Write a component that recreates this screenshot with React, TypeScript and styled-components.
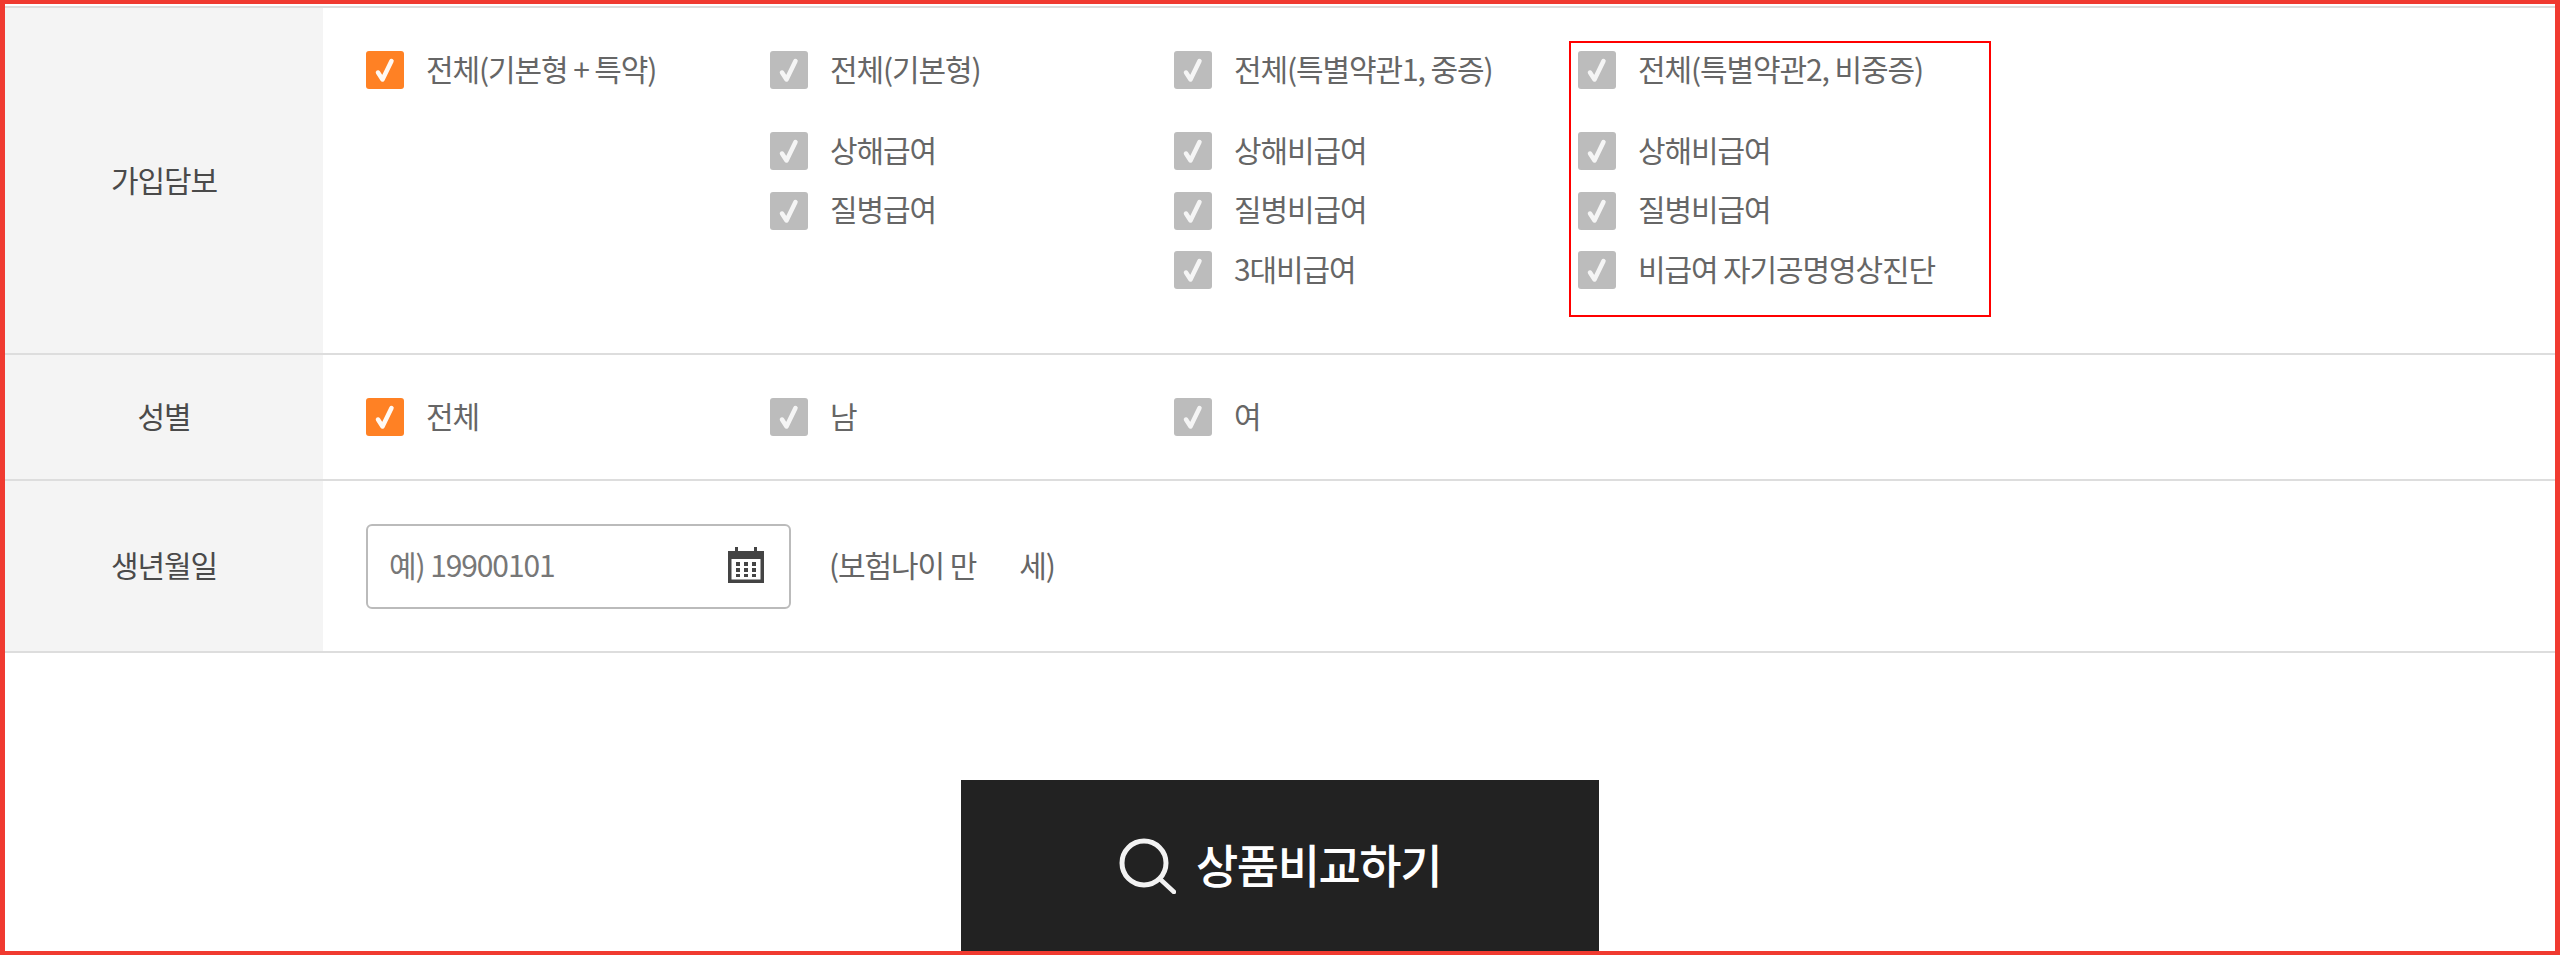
import React from 'react';
import styled, { createGlobalStyle } from 'styled-components';

const columns = [
  {
    lead: { label: '전체(기본형 + 특약)', active: true },
    items: [],
  },
  {
    lead: { label: '전체(기본형)', active: false },
    items: ['상해급여', '질병급여'],
  },
  {
    lead: { label: '전체(특별약관1, 중증)', active: false },
    items: ['상해비급여', '질병비급여', '3대비급여'],
  },
  {
    lead: { label: '전체(특별약관2, 비중증)', active: false },
    items: ['상해비급여', '질병비급여', '비급여 자기공명영상진단'],
    marked: true,
  },
];

const genders = [
  { label: '전체', active: true },
  { label: '남', active: false },
  { label: '여', active: false },
];

function Option({ label, active = false }: { label: string; active?: boolean }) {
  return (
    <StyledOption>
      <StyledCheck $active={active}>
        <svg width="38" height="38" viewBox="0 0 38 38" fill="none">
          <path d="M12 21.500 L16.500 28.500 L25.500 10" stroke="#fff" strokeOpacity={active ? 0.95 : 0.85} strokeWidth="4.500" strokeLinecap="round" strokeLinejoin="round" />
        </svg>
      </StyledCheck>
      <StyledRaisedText>{label}</StyledRaisedText>
    </StyledOption>
  );
}

export default function App() {
  return (
    <StyledFrame>
      <GlobalStyle />
      <StyledTable>
        <StyledRow $height={345}>
          <StyledLabel>가입담보</StyledLabel>
          <StyledOptions>
            {columns.map((column, idx) => (
              <StyledColumn key={idx} $marked={column.marked}>
                <StyledLead>
                  <Option label={column.lead.label} active={column.lead.active} />
                </StyledLead>
                {column.items.map((item) => <Option key={item} label={item} />)}
              </StyledColumn>
            ))}
          </StyledOptions>
        </StyledRow>
        <StyledRow $height={124}>
          <StyledLabel>성별</StyledLabel>
          <StyledOptions>
            {genders.map((gender) => (
              <StyledColumn key={gender.label}>
                <Option label={gender.label} active={gender.active} />
              </StyledColumn>
            ))}
          </StyledOptions>
        </StyledRow>
        <StyledRow $height={170}>
          <StyledLabel>생년월일</StyledLabel>
          <StyledBirth>
            <StyledDateBox>
              <StyledRaisedText>예) 19900101</StyledRaisedText>
              <StyledCalendar width="36" height="36" viewBox="0 0 36 36">
                <path fill="#444" fillRule="evenodd" d="M0 4h7V0h3v4h16V0h3v4h7v32H0z M3.500 12v20.500h29V12z" />
                <g fill="#444">
                  <rect x="8" y="15" width="4" height="4" />
                  <rect x="16" y="15" width="4" height="4" />
                  <rect x="24" y="15" width="4" height="4" />
                  <rect x="8" y="21" width="4" height="4" />
                  <rect x="16" y="21" width="4" height="4" />
                  <rect x="24" y="21" width="4" height="4" />
                  <rect x="8" y="27" width="4" height="3" />
                  <rect x="16" y="27" width="4" height="3" />
                  <rect x="24" y="27" width="4" height="3" />
                </g>
              </StyledCalendar>
            </StyledDateBox>
            <StyledAge>
              <StyledRaisedText>(보험나이 만</StyledRaisedText>
              <StyledRaisedText>세)</StyledRaisedText>
            </StyledAge>
          </StyledBirth>
        </StyledRow>
      </StyledTable>
      <StyledCompareButton>
        <svg width="57" height="56" viewBox="0 0 57 56" fill="none">
          <circle cx="25" cy="25" r="22" stroke="#f2f2f2" strokeWidth="5" />
          <path d="M41 41 L55 54" stroke="#f2f2f2" strokeWidth="4.500" strokeLinecap="round" />
        </svg>
        <StyledRaisedText>상품비교하기</StyledRaisedText>
      </StyledCompareButton>
    </StyledFrame>
  );
}

const GlobalStyle = createGlobalStyle`
  html, body {
    margin: 0;
    padding: 0;
    background: #fff;
  }

  body {
    font-family: "Noto Sans CJK KR", "Noto Sans", sans-serif;
  }
`;

const StyledFrame = styled.div`
  box-sizing: border-box;
  width: 2560px;
  height: 955px;
  overflow: hidden;
  border: 4px solid #f03a30;
  border-left-width: 5px;
  border-right-width: 5px;
  background: #fff;
`;

const StyledTable = styled.div`
  margin-top: 2px;
  border-top: 2px solid #ddd;
`;

const StyledRow = styled.div<{ $height: number }>`
  display: grid;
  grid-template-columns: 318px 1fr;
  height: ${({ $height }) => $height}px;
  border-bottom: 2px solid #ddd;
`;

const StyledLabel = styled.div`
  display: flex;
  align-items: center;
  justify-content: center;
  padding-bottom: 4px;
  background: #f4f4f4;
  color: #4a4a4a;
  font-size: 30px;
  font-weight: 400;
  letter-spacing: -1.100px;
`;

const StyledOptions = styled.div`
  display: grid;
  grid-template-columns: repeat(4, 404px);
  align-content: start;
  padding: 43px 0 0 43px;
`;

const StyledColumn = styled.div<{ $marked?: boolean }>`
  position: relative;
  display: flex;
  flex-direction: column;
  gap: 21.5px;

  &::after {
    display: ${({ $marked }) => ($marked ? 'block' : 'none')};
    content: '';
    position: absolute;
    top: -10px;
    left: -9px;
    width: 418px;
    height: 272px;
    border: 2px solid #f00;
  }
`;

const StyledLead = styled.div`
  margin-bottom: 21.5px;
`;

const StyledOption = styled.label`
  display: flex;
  align-items: center;
  gap: 22px;
  height: 38px;
  color: #666;
  font-size: 30px;
  font-weight: 400;
  letter-spacing: -1.100px;
  white-space: nowrap;
`;

const StyledRaisedText = styled.span`
  margin-top: -5px;
`;

const StyledCheck = styled.span<{ $active: boolean }>`
  flex: none;
  width: 38px;
  height: 38px;
  border-radius: 3px;
  background: ${({ $active }) => ($active ? '#ff8124' : '#bcbcbc')};
`;

const StyledBirth = styled.div`
  display: flex;
  align-items: center;
  gap: 38px;
  padding-left: 43px;
  color: #666;
  font-size: 30px;
  font-weight: 400;
  letter-spacing: -1.100px;
`;

const StyledDateBox = styled.div`
  box-sizing: border-box;
  display: flex;
  align-items: center;
  justify-content: space-between;
  width: 425px;
  height: 85px;
  padding: 0 25px 0 21px;
  border: 2px solid #bbb;
  border-radius: 6px;
  color: #777;
`;

const StyledCalendar = styled.svg`
  margin-top: -2px;
`;

const StyledAge = styled.div`
  display: flex;
  gap: 43px;
`;

const StyledCompareButton = styled.button`
  display: flex;
  align-items: center;
  justify-content: center;
  gap: 20px;
  width: 638px;
  height: 171px;
  margin: 127px auto 0;
  padding: 0;
  border: 0;
  background: #222;
  color: #fff;
  font-family: inherit;
  font-size: 46px;
  font-weight: 500;
  letter-spacing: -1.500px;
`;
